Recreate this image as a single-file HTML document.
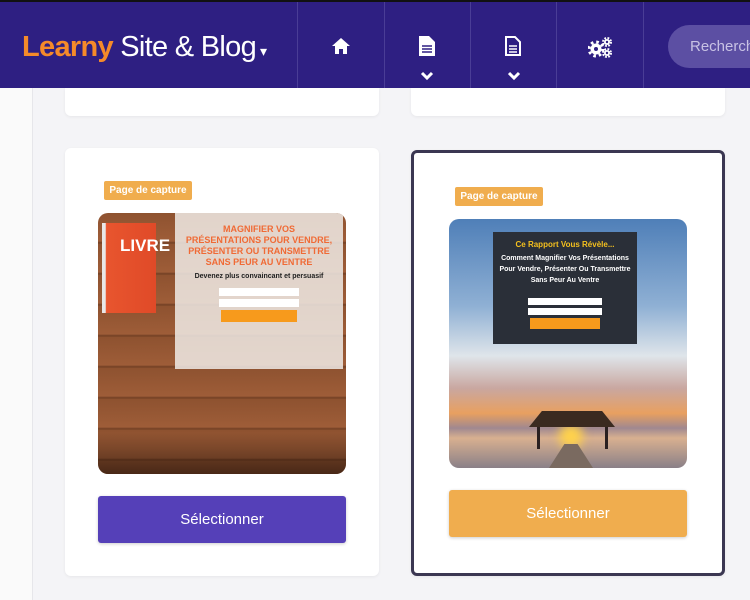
<!DOCTYPE html>
<html><head><meta charset="utf-8"><style>
*{box-sizing:border-box;margin:0;padding:0}
body{width:750px;height:600px;overflow:hidden;background:#f4f4f7;font-family:"Liberation Sans",sans-serif;position:relative}
.hdr{position:absolute;left:0;top:0;width:750px;height:88px;background:#2e1f82;border-top:2px solid #111}
.logo{position:absolute;left:22px;top:29px;font-size:29px;color:#fff;letter-spacing:-0.7px;font-weight:300}
.logo b{color:#f58a2a;font-weight:bold}
.div{position:absolute;top:0;width:1px;height:86px;background:#4a3d96}
.ic{position:absolute;color:#fff}
.search{position:absolute;left:668px;top:23px;width:120px;height:43px;border-radius:22px;background:#5c4fa3;color:#c8c2e4;font-size:15px;padding:13px 0 0 22px}
.side{position:absolute;left:0;top:88px;width:33px;height:512px;background:#fafafa;border-right:1px solid #e6e6ea}
.card{position:absolute;background:#fff;border-radius:6px;box-shadow:0 1px 3px rgba(0,0,0,.06)}
.badge{position:absolute;height:19px;width:88px;background:#f0ad4e;color:#fff;font-size:10px;font-weight:bold;border-radius:2px;padding:4px 0 0;text-align:center;white-space:nowrap}
.btn{position:absolute;height:47px;color:#fff;font-size:15px;text-align:center;line-height:47px;border-radius:3px;box-shadow:0 1px 3px rgba(0,0,0,.2)}
.img{position:absolute;border-radius:10px;overflow:hidden}
</style></head><body>
<div class="hdr">
<div class="logo"><b>Learny</b> Site &amp; Blog<span style="font-size:14px;margin-left:4px">▾</span></div>
<div class="div" style="left:297px"></div><div class="div" style="left:384px"></div><div class="div" style="left:470px"></div><div class="div" style="left:556px"></div><div class="div" style="left:643px"></div>
<svg class="ic" style="left:331px;top:35px" width="20" height="18" viewBox="0 0 20 18"><path d="M10 1L1 9h3v8h4v-5h4v5h4V9h3z" fill="#fff"/></svg>
<svg class="ic" style="left:418px;top:33px" width="18" height="22" viewBox="0 0 18 22"><path d="M1 1h10l6 6v14H1z" fill="#fff"/><path d="M4 11h10M4 14h10M4 17h10" stroke="#2e1f82" stroke-width="1.5"/></svg>
<svg class="ic" style="left:504px;top:33px" width="18" height="22" viewBox="0 0 18 22"><path d="M2 2h9l5 5v13H2z" fill="none" stroke="#fff" stroke-width="2"/><path d="M5 11h8M5 14h8M5 17h8" stroke="#fff" stroke-width="1.5"/></svg>
<svg class="ic" style="left:420px;top:69px" width="14" height="10" viewBox="0 0 14 10"><path d="M2 2l5 5 5-5" stroke="#fff" stroke-width="3" fill="none"/></svg>
<svg class="ic" style="left:507px;top:69px" width="14" height="10" viewBox="0 0 14 10"><path d="M2 2l5 5 5-5" stroke="#fff" stroke-width="3" fill="none"/></svg>
<svg class="ic" style="left:588px;top:34px" width="26" height="22" viewBox="0 0 26 22"><circle cx="8" cy="13" r="5.5" fill="#fff"/><circle cx="8" cy="13" r="7" fill="none" stroke="#fff" stroke-width="3" stroke-dasharray="2.6 2.9"/><circle cx="8" cy="13" r="2" fill="#2e1f82"/><circle cx="19" cy="6" r="3" fill="#fff"/><circle cx="19" cy="6" r="4" fill="none" stroke="#fff" stroke-width="2" stroke-dasharray="1.8 1.4"/><circle cx="19" cy="6" r="1.2" fill="#2e1f82"/><circle cx="19" cy="17" r="3" fill="#fff"/><circle cx="19" cy="17" r="4" fill="none" stroke="#fff" stroke-width="2" stroke-dasharray="1.8 1.4"/><circle cx="19" cy="17" r="1.2" fill="#2e1f82"/></svg>
<div class="search">Recherch</div>
</div>
<div class="side"></div>
<div class="card" style="left:65px;top:88px;width:314px;height:28px;border-radius:0 0 6px 6px"></div>
<div class="card" style="left:411px;top:88px;width:314px;height:28px;border-radius:0 0 6px 6px"></div>

<div class="card" style="left:65px;top:148px;width:314px;height:428px"></div>
<div class="badge" style="left:104px;top:181px">Page de capture</div>
<div class="img" style="left:98px;top:213px;width:248px;height:261px;background:repeating-linear-gradient(#8e5230 0px,#9e5d38 28px,#6e3d22 30px,#8e5230 31px),#8e5230">
 <div style="position:absolute;left:0;top:220px;width:248px;height:41px;background:linear-gradient(rgba(0,0,0,0),rgba(40,20,10,.7))"></div>
 <div style="position:absolute;left:4px;top:10px;width:54px;height:90px;background:linear-gradient(90deg,#e8e8e8 6%,#e8552e 8%,#e04a28);"><div style="color:#fff;font-weight:bold;font-size:17px;margin:14px 0 0 18px;line-height:1">LIVRE</div></div>
 <div style="position:absolute;left:77px;top:0;width:168px;height:156px;background:rgba(240,235,230,.85);text-align:center">
  <div style="color:#f06a35;font-size:9px;font-weight:bold;line-height:11px;margin-top:11px">MAGNIFIER VOS<br>PRÉSENTATIONS POUR VENDRE,<br>PRÉSENTER OU TRANSMETTRE<br>SANS PEUR AU VENTRE</div>
  <div style="font-size:7px;font-weight:bold;color:#222;margin-top:5px">Devenez plus convaincant et persuasif</div>
  <div style="width:80px;height:8px;background:#fff;margin:8px auto 3px"></div><div style="width:80px;height:8px;background:#fff;margin:0 auto 3px"></div>
  <div style="width:76px;height:12px;background:#f79a1c;margin:0 auto"></div>
 </div>
</div>
<div class="btn" style="left:98px;top:496px;width:248px;background:#5540b8">Sélectionner</div>

<div class="card" style="left:411px;top:150px;width:314px;height:426px;border:3px solid #3b3752"></div>
<div class="badge" style="left:455px;top:187px">Page de capture</div>
<div class="img" style="left:449px;top:219px;width:238px;height:249px;background:linear-gradient(#4f7fb8 0%,#8fb0d4 35%,#dfe5ea 55%,#c9a7a0 68%,#e8a060 78%,#a08890 84%,#d8b090 88%,#8a8088 100%)">
 <div style="position:absolute;left:44px;top:13px;width:144px;height:112px;background:#2a2f38;text-align:center;color:#fff">
  <div style="color:#f4c01e;font-size:8px;font-weight:bold;margin-top:8px">Ce Rapport Vous Révèle...</div>
  <div style="font-size:7px;font-weight:bold;line-height:11px;margin-top:4px">Comment Magnifier Vos Présentations<br>Pour Vendre, Présenter Ou Transmettre<br>Sans Peur Au Ventre</div>
  <div style="width:74px;height:7px;background:#fff;margin:12px auto 3px"></div><div style="width:74px;height:7px;background:#fff;margin:0 auto 3px"></div>
  <div style="width:70px;height:11px;background:#f79a1c;margin:0 auto"></div>
 </div>
 <div style="position:absolute;left:110px;top:205px;width:24px;height:24px;background:#ffd24a;border-radius:50%;filter:blur(5px)"></div>
 <div style="position:absolute;left:80px;top:192px;width:86px;height:16px;background:#3a2a20;clip-path:polygon(15% 0,85% 0,100% 100%,0 100%)"></div>
 <div style="position:absolute;left:88px;top:208px;width:3px;height:22px;background:#2a2020"></div><div style="position:absolute;left:156px;top:208px;width:3px;height:22px;background:#2a2020"></div>
 <div style="position:absolute;left:100px;top:225px;width:44px;height:24px;background:#7a6a60;clip-path:polygon(35% 0,65% 0,100% 100%,0 100%)"></div>
</div>
<div class="btn" style="left:449px;top:490px;width:238px;background:#f0ad4e">Sélectionner</div>
</body></html>
